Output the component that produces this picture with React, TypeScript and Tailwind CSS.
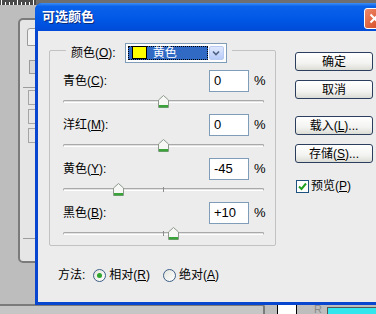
import React from 'react';

const font = "font-['Liberation_Sans','Noto_Sans_CJK_SC',sans-serif]";

function Acc({ text, k, tail }: { text: string; k: string; tail?: string }) {
  return (
    <span>
      {text}(<u>{k}</u>){tail}
    </span>
  );
}

function Slider({ value }: { value: number }) {
  const x = 100 + value;
  return (
    <div className="relative ml-[13px] h-[22px] w-[201px]">
      <div className="absolute left-0 right-0 top-[8px] h-[3px] rounded-full border border-[#a9a9a9] border-b-white bg-[#e2e2e2]" />
      <div className="absolute left-[100px] top-[7px] h-[5px] w-px bg-[#8d8d8d]" />
      <svg
        className="absolute top-[3px]"
        style={{ left: x - 5 }}
        width="11"
        height="13"
        viewBox="0 0 11 13"
      >
        <path d="M0.5 5 L5.5 0.5 L10.5 5 V12.5 H0.5 Z" fill="#f7f7f5" stroke="#8c9a8c" />
        <rect x="1" y="10" width="9" height="2.5" fill="#3aa33a" />
      </svg>
    </div>
  );
}

function ValueRow({ label, k, value, pos }: { label: string; k: string; value: string; pos: number }) {
  return (
    <div className="flex flex-col">
      <div className="flex h-[22px] items-center pl-[13px]">
        <span className="w-[146px] text-[12px] leading-none text-black">
          <Acc text={label} k={k} tail=":" />
        </span>
        <div className="flex h-[22px] w-[40px] items-center border border-[#7f9db9] bg-white pl-[4px] text-[13px] text-black">
          {value}
        </div>
        <span className="ml-[5px] text-[13px] text-black">%</span>
      </div>
      <Slider value={pos} />
    </div>
  );
}

function Button({ children }: { children: React.ReactNode }) {
  return (
    <div className="flex h-[19px] w-[78px] items-center justify-center rounded-[3px] border border-[#2c3e5e] bg-[linear-gradient(180deg,#ffffff_0%,#f3f3f1_60%,#dcdcd6_100%)] text-[12px] text-black">
      {children}
    </div>
  );
}

function Radio({ checked }: { checked?: boolean }) {
  return (
    <div className="flex h-[13px] w-[13px] items-center justify-center rounded-full border border-[#3b5f86] bg-[linear-gradient(135deg,#e4e4de,#ffffff)]">
      {checked && <div className="h-[5px] w-[5px] rounded-full bg-[#2ea52e]" />}
    </div>
  );
}

export default function App() {
  return (
    <div className={`relative h-[314px] w-[376px] overflow-hidden bg-[#bdbdbd] ${font}`}>
      {/* ruler strip */}
      <div className="flex h-[5px] w-full bg-[#6f6f6f]">
        <div className="flex h-full w-[36px] items-end gap-[3px] bg-[#4a4a4a] pl-[1px]">
          {Array.from({ length: 9 }).map((_, i) => (
            <div key={i} className={`w-px bg-white ${i % 4 === 0 ? 'h-[5px]' : 'h-[3px]'}`} />
          ))}
        </div>
      </div>

      {/* window behind */}
      <div className="absolute left-[18px] top-[18px] h-[245px] w-[60px] rounded-[5px] border-2 border-[#7b7b7b] bg-[#e6e6e6]">
        <div className="ml-[7px] mt-[8px] h-[18px] w-[20px] rounded-t-[3px] border border-[#9a9a9a] bg-[#f2f2f2]" />
        <div className="ml-[9px] mt-[14px] h-[14px] w-[12px] border border-[#9a9a9a] bg-[#d8d8d8]" />
        <div className="ml-[3px] mt-[13px] h-px w-[30px] bg-[#9c9c9c]" />
        <div className="ml-[8px] mt-[2px] h-[15px] w-[12px] border border-[#a5a5a5]" />
        <div className="ml-[8px] mt-[4px] h-[15px] w-[12px] border border-[#a5a5a5]" />
        <div className="ml-[8px] mt-[4px] h-[15px] w-[12px] border border-[#a5a5a5]" />
        <div className="ml-[3px] mt-[95px] h-px w-[30px] bg-[#9c9c9c]" />
      </div>

      {/* bottom strip items */}
      <div className="absolute left-0 top-[304px] flex h-[10px] w-full items-start">
        <div className="h-[12px] w-[265px] rounded-tr-[3px] border-r-2 border-t-2 border-[#7b7b7b] bg-[#c6c6c6]" />
        <div className="ml-[12px] h-[10px] w-[20px] border-x border-black bg-white" />
        <span className="ml-[17px] text-[11px] leading-[10px] text-[#8a8a8a]">R</span>
        <div className="ml-[5px] mt-[3px] h-[7px] flex-1 border-l border-t border-[#555] bg-[#33e6ee]" />
      </div>

      {/* dialog */}
      <div className="absolute left-[35px] top-[3px] flex h-[302px] w-[360px] flex-col overflow-hidden rounded-t-[7px] bg-[#0846d0]">
        <div className="relative flex h-[28px] items-center bg-[linear-gradient(180deg,#3d8ff6_0%,#0b62ea_12%,#0058e6_55%,#004bd8_100%)] pl-[7px]">
          <span className="text-[13px] font-bold text-white [text-shadow:1px_1px_0_#0a2a7a]">可选颜色</span>
          <div className="absolute left-[329px] top-[5px] flex h-[21px] w-[21px] items-center justify-center rounded-[3px] border border-white bg-[linear-gradient(135deg,#ee8a6a,#d0431c)]">
            <svg width="11" height="11" viewBox="0 0 11 11">
              <path d="M1.5 1.5 L9.5 9.5 M9.5 1.5 L1.5 9.5" stroke="white" strokeWidth="2" />
            </svg>
          </div>
        </div>

        <div className="mb-[3px] ml-[3px] flex flex-1 bg-[#ececec] pl-[11px] pt-[19px]">
          <div className="flex flex-col">
            {/* group box */}
            <div className="h-[196px] w-[227px] rounded-[2px] border border-[#c2c2c2]">
              <div className="ml-[16px] -mt-[9px] flex h-[21px] w-fit items-center bg-[#ececec] px-[5px]">
                <span className="text-[12px] text-black">
                  <Acc text="颜色" k="O" tail=":" />
                </span>
                <div className="ml-[9px] flex h-[20px] w-[102px] items-center border border-[#7f9db9] bg-white p-[2px]">
                  <div className="flex h-full flex-1 items-center border border-dotted border-black bg-[#316ac5] pl-[3px]">
                    <div className="h-[13px] w-[15px] border border-black bg-[#ffff00]" />
                    <span className="ml-[6px] text-[12px] leading-none text-white">黄色</span>
                  </div>
                  <div className="ml-[1px] flex h-full w-[15px] items-center justify-center rounded-[2px] border border-[#b9cbf3] bg-[linear-gradient(180deg,#dfe8fd,#b7cbf8)]">
                    <svg width="8" height="6" viewBox="0 0 8 6">
                      <path d="M1 1.5 L4 4.5 L7 1.5" fill="none" stroke="#4d6185" strokeWidth="1.6" />
                    </svg>
                  </div>
                </div>
              </div>
              <div className="mt-[7px] flex flex-col">
                <ValueRow label="青色" k="C" value="0" pos={0} />
                <ValueRow label="洋红" k="M" value="0" pos={0} />
                <ValueRow label="黄色" k="Y" value="-45" pos={-45} />
                <ValueRow label="黑色" k="B" value="+10" pos={10} />
              </div>
            </div>

            {/* method */}
            <div className="ml-[9px] mt-[19px] flex h-[20px] items-center text-[12px] text-black">
              <span>方法:</span>
              <div className="ml-[8px]">
                <Radio checked />
              </div>
              <span className="ml-[3px]">
                <Acc text="相对" k="R" />
              </span>
              <div className="ml-[13px]">
                <Radio />
              </div>
              <span className="ml-[3px]">
                <Acc text="绝对" k="A" />
              </span>
            </div>
          </div>

          {/* buttons */}
          <div className="ml-[19px] flex flex-col pt-[2px]">
            <Button>确定</Button>
            <div className="mt-[9px]">
              <Button>取消</Button>
            </div>
            <div className="mt-[17px]">
              <Button>
                <Acc text="载入" k="L" tail="..." />
              </Button>
            </div>
            <div className="mt-[9px]">
              <Button>
                <Acc text="存储" k="S" tail="..." />
              </Button>
            </div>
            <div className="ml-[1px] mt-[14px] flex items-center text-[12px] text-black">
              <div className="flex h-[13px] w-[13px] items-center justify-center border border-[#1c5180] bg-white">
                <svg width="9" height="9" viewBox="0 0 9 9">
                  <path d="M1 4.5 L3.5 7 L8 1.5" fill="none" stroke="#21a121" strokeWidth="2" />
                </svg>
              </div>
              <span className="ml-[2px]">
                <Acc text="预览" k="P" />
              </span>
            </div>
          </div>
        </div>
      </div>
    </div>
  );
}
